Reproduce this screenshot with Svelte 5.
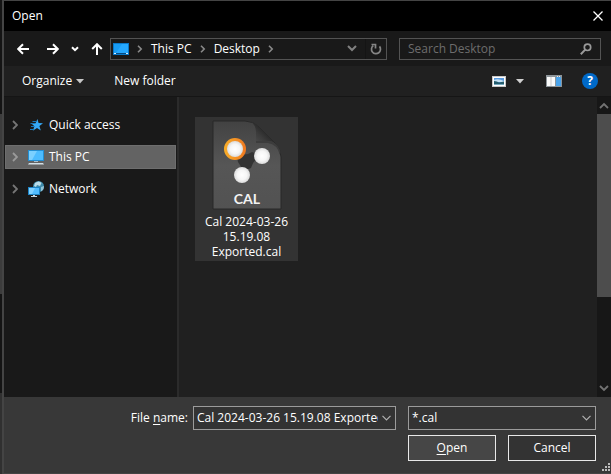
<script>
  const places = [
    { id: "quick", label: "Quick access" },
    { id: "pc", label: "This PC" },
    { id: "network", label: "Network" },
  ];
  const path = ["This PC", "Desktop"];

  let selected = $state("pc");
  let query = $state("");
  let fileName = $state("Cal 2024-03-26 15.19.08 Exported.cal");
  let filter = $state("*.cal");
</script>

{#snippet chevron()}
  <svg class="chevron" width="6" height="8" viewBox="0 0 6 8">
    <path d="M1 0.8 4.2 4 1 7.2" />
  </svg>
{/snippet}

<div class="window">
  <header class="title">
    <span>Open</span>
    <button class="plain" aria-label="Close">
      <svg width="10" height="10" viewBox="0 0 10 10">
        <path d="M0.5 0.5 9.5 9.5M9.5 0.5 0.5 9.5" stroke="#fff" stroke-width="1.3" />
      </svg>
    </button>
  </header>

  <nav class="bar">
    <div class="history">
      <button class="plain" aria-label="Back">
        <svg width="12" height="12" viewBox="0 0 12 12">
          <path class="arrow" d="M12 6H1.5M6 1.2 1.2 6 6 10.8" />
        </svg>
      </button>
      <button class="plain" aria-label="Forward">
        <svg width="12" height="12" viewBox="0 0 12 12">
          <path class="arrow" d="M0 6h10.5M6 1.2 10.8 6 6 10.8" />
        </svg>
      </button>
      <button class="plain" aria-label="Recent locations">
        <svg width="8" height="6" viewBox="0 0 8 6">
          <path class="arrow" d="M1 1.2 4 4.2 7 1.2" />
        </svg>
      </button>
      <button class="plain" aria-label="Up">
        <svg width="12" height="12" viewBox="0 0 12 12">
          <path class="arrow" d="M6 12V1.5M1.2 6 6 1.2 10.8 6" />
        </svg>
      </button>
    </div>

    <div class="address">
      <svg width="16" height="12" viewBox="0 0 16 12">
        <rect width="16" height="12" fill="#0a78c8" />
        <rect x="1" y="1" width="14" height="9" fill="#189cf4" />
        <path d="M9 1h6v9H3z" fill="#25a8ff" />
        <path d="M1 10.5h2M13 10.5h2" stroke="#d8f0ff" />
        <path d="M3 10.5h10" stroke="#044a80" />
      </svg>
      {@render chevron()}
      {#each path as part}
        <button class="plain">{part}</button>
        {@render chevron()}
      {/each}
      <span class="spacer"></span>
      <button class="plain" aria-label="Previous locations">
        <svg width="10" height="7" viewBox="0 0 10 7">
          <path d="M1 1 5 5 9 1" fill="none" stroke="#808080" stroke-width="2" />
        </svg>
      </button>
      <button class="plain refresh" aria-label="Refresh">
        <svg width="12" height="12" viewBox="0 0 12 12">
          <path
            d="M3.300 2.600A4.500 4.500 0 1 0 9.500 3.400M1.500 1.500H5.500V5.500"
            fill="none"
            stroke="#858585"
            stroke-width="1.7"
          />
        </svg>
      </button>
    </div>

    <label class="search">
      <input type="text" placeholder="Search Desktop" aria-label="Search Desktop" bind:value={query} />
      <svg width="12" height="12" viewBox="0 0 12 12">
        <circle cx="7.5" cy="4.3" r="3.2" fill="none" stroke="#999" stroke-width="1.7" />
        <path d="M5.2 6.6 0.8 11.2" stroke="#999" stroke-width="2" />
      </svg>
    </label>
  </nav>

  <div class="tools">
    <button class="plain">
      Organize
      <svg width="8" height="5" viewBox="0 0 8 5"><path d="M0 0h8L4 4.5z" fill="#c8c8c8" /></svg>
    </button>
    <button class="plain">New folder</button>
    <span class="spacer"></span>
    <button class="plain view" aria-label="Change view">
      <svg width="14" height="11" viewBox="0 0 14 11">
        <rect width="14" height="11" fill="#c9c9c9" />
        <rect x="1" y="1" width="12" height="9" fill="#fff" />
        <rect x="2" y="2" width="10" height="7" fill="#5a9be0" />
        <path d="M2 4q4-2 10 1v1H2z" fill="#c5e2f5" />
        <path d="M2 5q3 0 5 1.5l5-1V9H2z" fill="#245c6c" />
        <path d="M2 8h10v1H2z" fill="#76aac0" />
      </svg>
      <svg width="8" height="5" viewBox="0 0 8 5"><path d="M0 0h8L4 4.5z" fill="#d0d0d0" /></svg>
    </button>
    <button class="plain pane" aria-label="Preview pane">
      <svg width="16" height="12" viewBox="0 0 16 12">
        <rect width="16" height="12" fill="#8d9499" />
        <path d="M11 1h1v1h-1zM13 1h1v1h-1z" fill="#e8e8e8" />
        <path d="M1 2h4v9H1zM5 2h4v9H5z" fill="#fafafa" />
        <rect x="10" y="2" width="5" height="9" fill="#4aa3ea" />
        <path d="M5 2v9" stroke="#c8c8c8" />
      </svg>
    </button>
    <button class="plain help" aria-label="Help">?</button>
  </div>

  <div class="content">
    <aside>
      {#each places as place}
        <button
          class="place"
          class:selected={selected === place.id}
          onclick={() => (selected = place.id)}
        >
          <svg class="expand" width="6" height="10" viewBox="0 0 6 10">
            <path d="M1 1 5 5 1 9" />
          </svg>
          {#if place.id === "quick"}
            <svg width="16" height="16" viewBox="0 0 16 16">
              <path
                d="M9.4 2 10.6 6 15 6.2 11.4 9 12.8 13.6 9 11 4.8 13.8 6.4 9.2 3.4 6.4 7.6 6.2z"
                fill="#35a8f5"
              />
              <path d="M4.500 4.500h4M2.500 6.500h4M3 9.500h3M2 12.500h4" stroke="#1877b8" />
            </svg>
          {:else if place.id === "pc"}
            <svg width="16" height="16" viewBox="0 0 16 16">
              <rect y="1" width="16" height="11" fill="#238ed2" />
              <rect x="1" y="2" width="14" height="9" fill="#4dbcff" />
              <path d="M1 2h8L4 11H1z" fill="#7bd0ff" />
              <path d="M6 12h4v1H6z" fill="#a9bcc8" />
              <path d="M1 14h14l1 1.5H0z" fill="#d3dfe6" />
            </svg>
          {:else}
            <svg width="16" height="16" viewBox="0 0 16 16">
              <circle cx="10.5" cy="5.5" r="5.5" fill="#3d8aa9" />
              <path d="M7 2q4-3 6.500 0L12 5 9 4 8 6 6 5z" fill="#b9dce9" />
              <path d="M13 6l3-1q0 4-3 5.500z" fill="#92c4d8" />
              <rect y="6" width="12" height="8" fill="#1c83c5" />
              <rect x="1" y="7" width="10" height="6" fill="#50bcff" />
              <path d="M1 7h6l-3 6H1z" fill="#80d1ff" />
              <path d="M5 14h2v1H5zM3 15h6v1H3z" fill="#c4d3dc" />
            </svg>
          {/if}
          <span>{place.label}</span>
        </button>
      {/each}
    </aside>

    <main>
      <button class="file">
        <svg width="72" height="92" viewBox="0 0 72 92">
          <defs>
            <linearGradient id="sheet" x1="0" y1="0" x2="0" y2="1">
              <stop offset="0" stop-color="#424242" />
              <stop offset="0.5" stop-color="#565656" />
              <stop offset="1" stop-color="#525252" />
            </linearGradient>
            <linearGradient id="fold" x1="0" y1="1" x2="0.7" y2="0.3">
              <stop offset="0" stop-color="#5c5c5c" />
              <stop offset="0.6" stop-color="#3a3a3a" />
              <stop offset="1" stop-color="#1c1c1c" />
            </linearGradient>
            <linearGradient id="ring" x1="0" y1="0" x2="1" y2="0">
              <stop offset="0" stop-color="#f9ae28" />
              <stop offset="1" stop-color="#f07820" />
            </linearGradient>
            <radialGradient id="ball">
              <stop offset="0" stop-color="#fff" />
              <stop offset="0.6" stop-color="#f6f6f6" />
              <stop offset="1" stop-color="#dcdcdc" />
            </radialGradient>
          </defs>
          <path
            d="M2 2H34Q42 2 48 8L64 24Q70 30 70 38V90H2z"
            fill="url(#sheet)"
            stroke="#292929"
          />
          <path d="M45 22H57Q65 22 69 31V36Q66 25 57 24H45z" fill="#3c3c3c" />
          <path d="M39 2Q45 6 45 13V22H57Q65 22 69 31Q67 27 64 24L48 8Q43 3 39 2z" fill="url(#fold)" />
          <path d="M25 33Q33 38 41 33L51 37Q43 39 40 49L32 52Q30 47 27 43z" fill="#333" />
          <circle cx="24" cy="30" r="11" fill="url(#ring)" />
          <circle cx="24" cy="30" r="8" fill="url(#ball)" />
          <circle cx="51" cy="37" r="8" fill="url(#ball)" />
          <circle cx="31" cy="56" r="8" fill="url(#ball)" />
          <text x="36" y="85" text-anchor="middle">CAL</text>
        </svg>
        <span>Cal 2024-03-26<br />15.19.08<br />Exported.cal</span>
      </button>
    </main>

    <div class="scrollbar">
      <svg width="10" height="7" viewBox="0 0 10 7"><path d="M1 6 5 2 9 6" /></svg>
      <div class="thumb"></div>
      <svg width="10" height="7" viewBox="0 0 10 7"><path d="M1 1 5 5 9 1" /></svg>
    </div>
  </div>

  <footer>
    <div class="fields">
      <label for="name">File <u>n</u>ame:</label>
      <div class="combo name">
        <input id="name" type="text" bind:value={fileName} />
        <button class="plain" aria-label="Recent files">
          <svg width="9" height="6" viewBox="0 0 9 6"><path d="M0.5 0.8 4.5 4.8 8.5 0.8" /></svg>
        </button>
      </div>
      <div class="combo type">
        <select aria-label="File type" bind:value={filter}>
          <option>*.cal</option>
        </select>
        <svg width="9" height="6" viewBox="0 0 9 6"><path d="M0.5 0.8 4.5 4.8 8.5 0.8" /></svg>
      </div>
    </div>
    <div class="actions">
      <button class="action primary"><span><u>O</u>pen</span></button>
      <button class="action">Cancel</button>
    </div>
    <svg class="grip" width="8" height="8" viewBox="0 0 8 8">
      <path d="M6 0h2v2H6zM3 3h2v2H3zM6 3h2v2H6zM0 6h2v2H0zM3 6h2v2H3zM6 6h2v2H6z" fill="#bbb" />
    </svg>
  </footer>
</div>

<style>
  :global(body) {
    background: linear-gradient(#141414 24%, #3c3c3c 24% 62%, #141414 62% 83%, #303030 83%);
  }

  .window {
    display: flex;
    flex-direction: column;
    box-sizing: border-box;
    min-height: 100vh;
    margin-left: 2px;
    border: solid #444;
    border-width: 1px 0 1px 2px;
    background: #191919;
    color: #fff;
    font: 12px/16px "Open Sans", "Noto Sans", sans-serif;
  }

  svg {
    display: block;
    flex: none;
  }

  button,
  input,
  select {
    font: inherit;
    color: inherit;
  }

  .plain {
    display: flex;
    align-items: center;
    padding: 0;
    border: 0;
    background: none;
    white-space: nowrap;
  }

  .spacer {
    flex: 1;
  }

  .title {
    display: flex;
    align-items: center;
    justify-content: space-between;
    height: 30px;
    padding: 0 8px;
    background: #000;
  }

  .bar {
    display: flex;
    align-items: center;
    gap: 12px;
    height: 35px;
    padding: 0 10px 0 13px;
  }

  .history {
    display: flex;
    align-items: center;
    gap: 12px;
    margin-right: -5px;
  }

  .history .plain:first-child {
    margin-right: 6px;
  }

  .arrow {
    fill: none;
    stroke: #fff;
    stroke-width: 2;
  }

  .address,
  .search {
    display: flex;
    align-items: center;
    box-sizing: border-box;
    height: 22px;
    border: 1px solid #535353;
  }

  .address {
    flex: 1;
    gap: 8px;
    padding: 0 4px 0 2px;
  }

  .chevron path {
    fill: none;
    stroke: #8a8a8a;
    stroke-width: 1.6;
  }

  .refresh {
    height: 20px;
    padding-left: 4px;
    border-left: 1px solid #141414;
  }

  .search {
    width: 202px;
    padding: 0 8px;
  }

  .search input {
    flex: 1;
    min-width: 0;
    padding: 0;
    border: 0;
    outline: 0;
    background: none;
  }

  .search input::placeholder {
    color: #6d6d6d;
    opacity: 1;
  }

  .tools {
    display: flex;
    align-items: center;
    height: 30px;
    padding: 0 13px 0 18px;
    border-bottom: 1px solid #151515;
    background: #202020;
  }

  .tools .plain {
    gap: 4px;
    margin-right: 30px;
  }

  .tools .view {
    gap: 10px;
    margin-right: 22px;
  }

  .tools .pane {
    margin-right: 20px;
  }

  .tools .help {
    justify-content: center;
    width: 16px;
    height: 16px;
    margin: 0;
    border-radius: 50%;
    background: #0069c8;
    font-weight: 700;
  }

  .content {
    display: flex;
    flex: 1;
  }

  aside {
    display: flex;
    flex-direction: column;
    gap: 8px;
    width: 171px;
    padding: 16px 1px 0;
    border-right: 2px solid #2b2b2b;
  }

  .place {
    display: flex;
    align-items: center;
    height: 24px;
    padding: 0 6px;
    border: 1px solid transparent;
    background: none;
    text-align: left;
  }

  .place.selected {
    border-color: #6e6e6e;
    background: #636363;
  }

  .place svg {
    margin-right: 5px;
  }

  .place .expand {
    margin-right: 10px;
  }

  .expand path {
    fill: none;
    stroke: #767676;
    stroke-width: 1.8;
  }

  .selected .expand path {
    stroke: #9a9a9a;
  }

  main {
    flex: 1;
    padding: 20px 16px;
    background: #202020;
  }

  .file {
    display: flex;
    flex-direction: column;
    align-items: center;
    gap: 3px;
    width: 103px;
    padding: 2px 0;
    border: 0;
    background: #333;
    line-height: 15px;
  }

  .file text {
    fill: #f2f2f2;
    font: 700 14px Lato, sans-serif;
  }

  .scrollbar {
    display: flex;
    flex-direction: column;
    align-items: center;
    width: 14px;
    padding: 5px 0;
    background: #171717;
  }

  .scrollbar path {
    fill: none;
    stroke: #737373;
    stroke-width: 1.8;
  }

  .thumb {
    width: 14px;
    height: 63%;
    margin: 5px 0 auto;
    background: #4d4d4d;
  }

  footer {
    position: relative;
    padding: 9px 15px 12px;
    background: #383838;
  }

  .fields,
  .actions {
    display: flex;
    justify-content: flex-end;
    gap: 12px;
  }

  .fields {
    align-items: center;
    margin-bottom: 5px;
  }

  .fields label {
    margin-right: -7px;
  }

  u {
    text-underline-offset: 2px;
  }

  .combo {
    display: flex;
    align-items: center;
    box-sizing: border-box;
    height: 24px;
    padding: 0 4px 0 3px;
    border: 1px solid #9b9b9b;
    background: #333;
  }

  .combo path {
    fill: none;
    stroke: #b0b0b0;
    stroke-width: 1.2;
  }

  .combo input,
  .combo select {
    flex: 1;
    min-width: 0;
    padding: 0;
    border: 0;
    outline: 0;
    background: none;
    appearance: none;
  }

  .combo option {
    background: #333;
  }

  .name {
    width: 203px;
  }

  .name input {
    margin-right: 4px;
  }

  .type {
    width: 188px;
  }

  .action {
    width: 88px;
    height: 26px;
    padding: 0;
    border: 1px solid #e8e8e8;
    background: #333;
  }

  .primary {
    background: #464646;
  }

  .grip {
    position: absolute;
    right: 1px;
    bottom: 2px;
  }
</style>
